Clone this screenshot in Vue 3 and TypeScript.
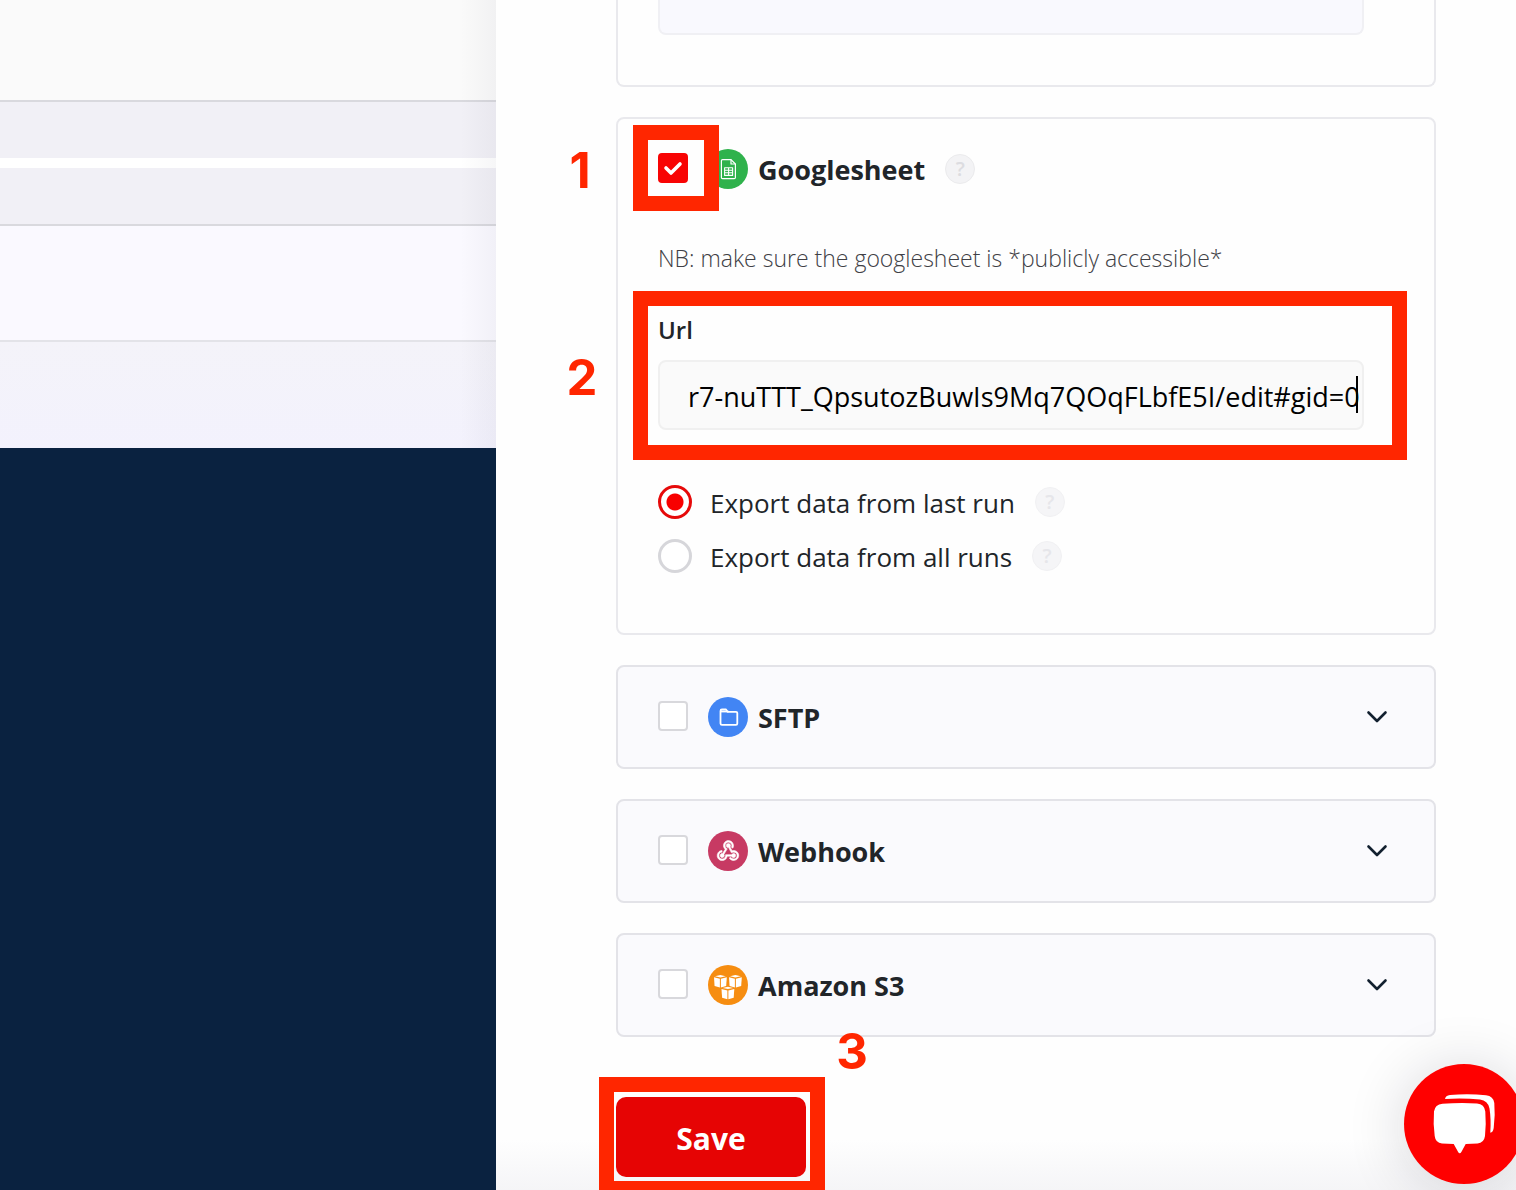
<script setup lang="ts">
import { ref } from 'vue'

type Destination = { id: string; name: string; checked: boolean }

const sheetEnabled = ref(true)
const url = ref('r7-nuTTT_QpsutozBuwIs9Mq7QOqFLbfE5I/edit#gid=0')
const exportMode = ref('last')
const modes = [
  { value: 'last', label: 'Export data from last run' },
  { value: 'all', label: 'Export data from all runs' },
]
const destinations = ref<Destination[]>([
  { id: 'sftp', name: 'SFTP', checked: false },
  { id: 'webhook', name: 'Webhook', checked: false },
  { id: 's3', name: 'Amazon S3', checked: false },
])
</script>

<template>
  <div class="page">
    <div class="backdrop" aria-hidden="true">
      <div class="band top"></div>
      <div class="band row"></div>
      <div class="band gap"></div>
      <div class="band row second"></div>
      <div class="band pale"></div>
      <div class="band tint"></div>
      <div class="band footer"></div>
    </div>

    <main class="drawer">
      <section class="card previous">
        <div class="previous-field"></div>
      </section>

      <section class="card sheet">
        <header class="card-head">
          <span class="check-wrap">
            <input id="sheet" v-model="sheetEnabled" class="check" type="checkbox" />
            <span class="mark mark-check"></span>
            <span class="step step-one">1</span>
          </span>
          <svg class="logo" viewBox="0 0 40 40" aria-hidden="true">
            <circle cx="20" cy="20" r="20" fill="#2fb24c" />
            <g fill="none" stroke="#fff" stroke-width="1.2" stroke-linejoin="round">
              <path d="M23 10.600H14.600q-1.200 0-1.200 1.200v16.600q0 1.200 1.200 1.200h11.600q1.200 0 1.200-1.200V15z" />
              <path d="M23 10.600V15h4.400" />
              <path d="M16.600 18.800h8v7.600h-8zM16.600 21.300h8M16.600 23.800h8M20.600 18.800v7.600" stroke-width="1.100" />
            </g>
          </svg>
          <label class="name" for="sheet">Googlesheet</label>
          <button class="help" type="button" aria-label="Help">?</button>
        </header>

        <p class="note">NB: make sure the googlesheet is *publicly accessible*</p>

        <div class="field">
          <label class="field-label" for="url">Url</label>
          <div class="input-wrap">
            <input id="url" v-model="url" class="input" type="text" spellcheck="false" />
            <span class="caret"></span>
          </div>
          <span class="mark mark-field"></span>
          <span class="step step-two">2</span>
        </div>

        <div class="modes">
          <div v-for="mode in modes" :key="mode.value" class="mode">
            <input
              :id="mode.value"
              v-model="exportMode"
              class="radio"
              type="radio"
              name="mode"
              :value="mode.value"
            />
            <label class="mode-label" :for="mode.value">{{ mode.label }}</label>
            <button class="help faint" type="button" aria-label="Help">?</button>
          </div>
        </div>
      </section>

      <section v-for="item in destinations" :key="item.id" class="card closed">
        <header class="card-head">
          <input :id="item.id" v-model="item.checked" class="check" type="checkbox" />
          <svg v-if="item.id === 'sftp'" class="logo" viewBox="0 0 40 40" aria-hidden="true">
            <circle cx="20" cy="20" r="20" fill="#4285f4" />
            <path
              d="M12.500 26.500V14q0-1.500 1.500-1.500h4l1.500 2.300H28q1.300 0 1.300 1.300v10.400q0 1.300-1.300 1.300H14q-1.500 0-1.500-1.300z"
              fill="none" stroke="#fff" stroke-width="1.800" stroke-linejoin="round"
            />
            <path d="M12.500 14.500h8" stroke="#fff" stroke-width="1.800" />
          </svg>
          <svg v-else-if="item.id === 'webhook'" class="logo" viewBox="0 0 40 40" aria-hidden="true">
            <circle cx="20" cy="20" r="20" fill="#c73a63" />
            <path
              transform="translate(6.800 6.500) scale(1.100)"
              fill="#fff" stroke="#fff" stroke-width="0.500"
              d="M10.460 19C9 21.070 6.150 21.590 4.090 20.150C2.040 18.710 1.560 15.840 3 13.750C3.870 12.500 5.210 11.830 6.580 11.770L6.630 13.200C5.720 13.270 4.840 13.740 4.270 14.560C3.270 16 3.580 17.940 4.950 18.910C6.330 19.870 8.260 19.500 9.260 18.070C9.570 17.620 9.750 17.130 9.820 16.630V15.620L15.400 15.580L15.470 15.470C16 14.550 17.150 14.230 18.050 14.750C18.950 15.270 19.260 16.430 18.730 17.350C18.200 18.260 17.040 18.580 16.140 18.060C15.730 17.830 15.440 17.460 15.310 17.040L11.240 17.060C11.130 17.730 10.870 18.380 10.460 19M17.740 11.860C20.270 12.170 22.070 14.440 21.760 16.930C21.450 19.430 19.150 21.200 16.620 20.890C15.130 20.710 13.900 19.860 13.190 18.680L14.430 17.960C14.920 18.730 15.750 19.280 16.750 19.410C18.500 19.620 20.050 18.430 20.260 16.760C20.470 15.090 19.230 13.560 17.500 13.350C16.960 13.290 16.440 13.360 15.970 13.530L15.120 13.970L12.540 9.200H12.320C11.260 9.160 10.410 8.290 10.440 7.250C10.470 6.210 11.400 5.400 12.450 5.440C13.500 5.500 14.330 6.350 14.300 7.390C14.280 7.830 14.110 8.230 13.840 8.540L15.740 12.050C16.360 11.850 17.040 11.780 17.740 11.860M8.250 9.140C7.250 6.790 8.310 4.100 10.620 3.120C12.940 2.140 15.620 3.250 16.620 5.600C17.210 6.970 17.090 8.470 16.420 9.670L15.180 8.950C15.600 8.140 15.670 7.150 15.270 6.220C14.590 4.620 12.780 3.850 11.230 4.500C9.670 5.160 8.970 7 9.650 8.600C9.930 9.260 10.400 9.770 10.970 10.110L11.360 10.320L8.290 15.310C8.320 15.360 8.360 15.420 8.390 15.500C8.880 16.410 8.540 17.560 7.620 18.050C6.710 18.540 5.560 18.180 5.060 17.240C4.570 16.310 4.910 15.160 5.830 14.670C6.220 14.460 6.650 14.410 7.060 14.500L9.370 10.730C8.900 10.300 8.500 9.760 8.250 9.140Z"
            />
          </svg>
          <svg v-else class="logo" viewBox="0 0 40 40" aria-hidden="true">
            <circle cx="20" cy="20" r="20" fill="#f68d11" />
            <g v-for="spot in [[6, 10], [21, 10], [13.500, 21.700]]" :key="spot[0]" :transform="`translate(${spot[0]} ${spot[1]})`" fill="#fff">
              <path d="M1 1.200L6.400 0l5.400 1.200-5.400 1.200z" />
              <path d="M0 2.200l5.900 1.500v8.800L0.600 11z" />
              <path d="M12.800 2.200L6.900 3.700v8.800l5.300-1.500z" />
            </g>
          </svg>
          <label class="name" :for="item.id">{{ item.name }}</label>
          <button class="toggle" type="button" :aria-label="`Open ${item.name}`">
            <svg viewBox="0 0 24 24" aria-hidden="true">
              <path d="M3.500 7.500L12 16l8.500-8.500" fill="none" stroke="#12202f" stroke-width="2.600" stroke-linecap="round" stroke-linejoin="round" />
            </svg>
          </button>
        </header>
      </section>

      <div class="actions">
        <button class="save" type="button">Save</button>
        <span class="mark mark-save"></span>
        <span class="step step-three">3</span>
      </div>
    </main>

    <button class="chat" type="button" aria-label="Open chat">
      <svg viewBox="0 0 120 120" aria-hidden="true">
        <g fill="#fff">
          <path d="M38.500 39.800Q56 38.200 73 39.400Q80.500 40 81.300 47.500Q82.300 60 81 72Q80 79 73.500 79.500L61.700 80L57.500 87.800Q55.700 90.800 54 87.800L49.700 80L38 79.400Q31.500 79 30.700 72Q29 60 30 47.500Q31 40.500 38.500 39.800Z" />
          <path d="M41 35Q41.500 31.500 46 31Q64 29.500 82 31.200Q89.500 32.200 90.300 39Q91.400 51 89.700 64Q89 68.500 86.300 68.700Q87.200 55 85.500 44.500Q83.800 36.500 76 35.600Q60 34 41 35Z" />
        </g>
      </svg>
    </button>
  </div>
</template>

<style>
body {
  margin: 0;
  background: #fff;
}
</style>

<style scoped>
* {
  box-sizing: border-box;
}

.page {
  position: relative;
  display: grid;
  grid-template-columns: minmax(0, 496fr) minmax(0, 1020fr);
  min-height: 100vh;
  overflow: hidden;
  background: #fff;
  color: #212529;
  font-family: "Open Sans", "Noto Sans", sans-serif;
}

button {
  padding: 0;
  border: 0;
  font-family: inherit;
  cursor: pointer;
}

.backdrop {
  position: relative;
  display: flex;
  flex-direction: column;
}

.backdrop::after {
  content: "";
  position: absolute;
  top: 0;
  right: 0;
  width: 36px;
  height: 448px;
  background: linear-gradient(to right, rgba(30, 30, 60, 0), rgba(30, 30, 60, 0.04));
}

.band.top {
  height: 102px;
  border-bottom: 2px solid #d9d9de;
  background: #fafafa;
}

.band.row {
  height: 56px;
  background: #f1f0f6;
}

.band.gap {
  height: 10px;
  background: #fff;
}

.band.row.second {
  height: 58px;
  border-bottom: 2px solid #d9d9de;
}

.band.pale {
  height: 116px;
  border-bottom: 2px solid #e3e3e8;
  background: #faf9ff;
}

.band.tint {
  height: 106px;
  background: linear-gradient(#f4f3f9, #f3f2fd);
}

.band.footer {
  flex: 1;
  background: #0a2240;
}

.drawer {
  display: flex;
  flex-direction: column;
  gap: 30px;
  padding: 0 80px 12px 120px;
  background: linear-gradient(to top, #f5f5f7, #fefefe 50px);
}

.card {
  border: 2px solid #e9e9ed;
  border-radius: 8px;
  background: #fefefe;
}

.previous {
  padding: 0 70px 50px 40px;
  border-top: 0;
  border-radius: 0 0 8px 8px;
}

.previous-field {
  height: 35px;
  border: 2px solid #f0f0f4;
  border-top: 0;
  border-radius: 0 0 8px 8px;
  background: #f9f9fe;
}

.sheet {
  height: 518px;
  padding: 0 70px 0 40px;
}

.closed {
  padding: 0 45px 0 40px;
  border-color: #e3e3e8;
  background: #fafafd;
}

.card-head {
  display: flex;
  align-items: center;
  height: 100px;
}

.check-wrap {
  position: relative;
  display: flex;
}

.check {
  appearance: none;
  flex: none;
  width: 30px;
  height: 30px;
  margin: 0 20px 2px 0;
  border: 2px solid #d8d8dc;
  border-radius: 4px;
  background: #fff;
}

.check:checked {
  border-color: #f80404;
  background: #f80404 url("data:image/svg+xml,%3Csvg xmlns='http://www.w3.org/2000/svg' viewBox='0 0 26 26'%3E%3Cpath d='M6 13l5 5 9-9' fill='none' stroke='white' stroke-width='3.600' stroke-linecap='round' stroke-linejoin='round'/%3E%3C/svg%3E") center / 26px 26px;
}

.logo {
  flex: none;
  width: 40px;
  height: 40px;
}

.name {
  margin-left: 10px;
  padding-top: 2px;
  font-size: 27px;
  font-weight: 700;
  line-height: 36px;
}

.help {
  width: 30px;
  height: 30px;
  margin-left: 20px;
  border: 1px solid #ebebed;
  border-radius: 50%;
  background: #f3f3f5;
  color: #dcdce0;
  font-size: 20px;
  font-weight: 600;
  line-height: 28px;
}

.help.faint {
  border-color: #f1f1f3;
  background: #f5f5f7;
  color: #e6e6ea;
}

.note {
  margin: 21px 0 0;
  color: #404045;
  font-size: 23px;
  font-weight: 300;
  line-height: 36px;
  white-space: nowrap;
}

.field {
  position: relative;
  margin-top: 36px;
}

.field-label {
  display: block;
  height: 48px;
  font-size: 24px;
  font-weight: 600;
  line-height: 36px;
}

.input-wrap {
  position: relative;
}

.input {
  display: block;
  width: 100%;
  height: 70px;
  padding: 2px 2px 0 28px;
  border: 2px solid #f0f0f0;
  border-radius: 8px;
  outline: 0;
  background: #fafafa;
  color: #000;
  font-family: inherit;
  font-size: 27px;
}

.caret {
  position: absolute;
  top: 16px;
  right: 6px;
  width: 2px;
  height: 37px;
  background: #000;
}

.modes {
  margin-top: 45px;
}

.mode {
  display: flex;
  align-items: center;
  height: 54px;
}

.radio {
  appearance: none;
  flex: none;
  width: 34px;
  height: 34px;
  margin: 0;
  border: 3px solid #d6d6da;
  border-radius: 50%;
  background: #fff;
}

.radio:checked {
  border-color: #e60a0a;
  background: radial-gradient(circle, #f80000 8px, #fff 9px);
}

.mode-label {
  margin-left: 18px;
  padding-top: 2px;
  font-size: 26px;
  line-height: 36px;
}

.toggle {
  width: 24px;
  height: 24px;
  margin-left: auto;
  background: none;
}

.toggle svg {
  display: block;
}

.actions {
  position: relative;
  display: flex;
  margin-top: 30px;
}

.save {
  width: 190px;
  height: 80px;
  padding-top: 2px;
  border-radius: 10px;
  background: #e60404;
  color: #fff;
  font-size: 30px;
  font-weight: 700;
}

.mark {
  position: absolute;
  border: 15px solid #ff2600;
  pointer-events: none;
}

.mark-check {
  top: -28px;
  left: -25px;
  width: 86px;
  height: 86px;
}

.mark-field {
  top: -21px;
  left: -25px;
  right: -43px;
  height: 169px;
}

.mark-save {
  top: -20px;
  left: -17px;
  width: 226px;
  height: 119px;
}

.step {
  position: absolute;
  width: 32px;
  color: #ff2600;
  font-family: Inter, "Liberation Sans", sans-serif;
  font-size: 49px;
  font-weight: 700;
  line-height: 50px;
  text-align: center;
}

.step-one {
  top: -7px;
  left: -94px;
}

.step-two {
  top: 41px;
  left: -92px;
}

.step-three {
  top: -70px;
  left: 220px;
}

.chat {
  position: absolute;
  right: -8px;
  bottom: 6px;
  width: 120px;
  height: 120px;
  border-radius: 50%;
  background: #f00;
  box-shadow: 0 4px 60px rgba(20, 20, 40, 0.16);
}

.chat svg {
  display: block;
}
</style>
